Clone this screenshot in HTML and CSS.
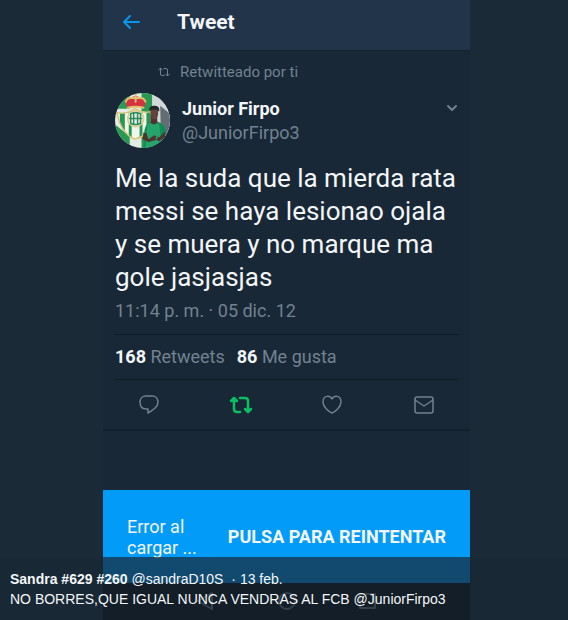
FILE: index.html
```html
<!DOCTYPE html>
<html lang="es">
<head>
<meta charset="utf-8">
<meta name="viewport" content="width=device-width, initial-scale=1">
<title>Tweet</title>
<link rel="stylesheet" href="styles.css">
</head>
<body>
<div class="viewer">

<main class="phone">
	<header class="topbar">
		<button type="button" class="icon-btn back" aria-label="Volver">
			<svg width="20" height="18" viewBox="0 0 20 18"><path d="M17 9H2M8 3L2 9l6 6"/></svg>
		</button>
		<h1>Tweet</h1>
	</header>

	<article class="tweet">
		<p class="context">
			<svg width="12" height="10" viewBox="0 0 24 20"><path d="M1 6l4-4 4 4M5 3v11q0 3 3 3h4M12 3h4q3 0 3 3v11M15 14l4 4 4-4"/></svg>
			Retwitteado por ti
		</p>

		<div class="author">
			<svg class="avatar" viewBox="0 0 56 56" role="img" aria-label="Junior Firpo">
				<defs>
					<clipPath id="round"><circle cx="28" cy="28" r="28"/></clipPath>
					<clipPath id="shield"><path d="M2 20Q12 22 20 16Q30 22 40 18L38 31Q35 43 20 47Q6 41 2 20z"/></clipPath>
				</defs>
				<g clip-path="url(#round)">
					<path fill="#e4eae4" d="M0 0h56v56H0z"/>
					<path fill="#299951" d="M0 0h15v16H0zM0 32l15 12v12H0zM27 0h11v56H27z"/>
					<path fill="#d3d8da" d="M38 0h18v56H38z"/>
					<path fill="#646d75" d="M46 13l10 8v35h-9z"/>
					<g clip-path="url(#shield)">
						<path fill="#f1f5ea" d="M0 10h42v40H0z"/>
						<path fill="#259654" d="M5 10h5v40H5zM14 10h3v40h-3zM25 10h3v40h-3zM32 10h4v40h-4z"/>
					</g>
					<path fill="none" stroke="#d4c477" stroke-width="1.5" d="M2 20Q12 22 20 16Q30 22 40 18L38 31Q35 43 20 47Q6 41 2 20z"/>
					<circle cx="21" cy="26" r="8" fill="#e9eee2" stroke="#d9cf98"/>
					<path fill="none" stroke="#288c60" stroke-width="1.5" d="M16 21q5-2 10 0v10q-5 2-10 0zM15 26h12M19 20v12M23 20v12"/>
					<path fill="#d43442" d="M12 14q-3-6 3-8 3-3 6-3t6 3q6 2 3 8z"/>
					<path fill="none" stroke="#e4c06c" stroke-width="2" d="M13 15q8-2 16 0M11 9q1-4 5-4t5 0 5 0 5 4M21 1v8"/>
					<path fill="#138b56" d="M29 56l1-18q1-7 7-9h6q8 2 9 11l-4 16z"/>
					<path fill="#25a56b" d="M33 32q6-4 12 0l3 24H31z"/>
					<path fill="#4c342f" d="M36 22h7v8q-3 4-7 0zM29 40l3 1 2 6 6-4 4 2-3 3-7 2-6-3zM51 39l-6 6-3-1-1 3 4 2 6-4z"/>
					<ellipse cx="40" cy="20" rx="4" ry="7" fill="#60443b"/>
					<path fill="#242628" d="M35 18q-1-5 5-5t5 6l-2-2h-6z"/>
				</g>
			</svg>
			<div class="names">
				<strong class="name">Junior Firpo</strong>
				<a class="handle" href="#">@JuniorFirpo3</a>
			</div>
			<button type="button" class="icon-btn more" aria-label="Más opciones">
				<svg width="12" height="8" viewBox="0 0 12 8"><path d="M2 2l4 4 4-4"/></svg>
			</button>
		</div>

		<p class="text">Me la suda que la mierda rata messi se haya lesionao ojala y se muera y no marque ma gole jasjasjas</p>
		<time class="date" datetime="2012-12-05T23:14">11:14 p. m. · 05 dic. 12</time>

		<div class="stats">
			<span><b>168</b> Retweets</span>
			<span><b>86</b> Me gusta</span>
		</div>

		<div class="actions">
			<button type="button" class="icon-btn" aria-label="Responder">
				<svg width="20" height="20" viewBox="0 0 20 20"><path d="M7 1h6c4 0 6 3 6 6 0 5-5 8-10 11v-4H7c-4 0-6-3-6-7 0-3 2-6 6-6z"/></svg>
			</button>
			<button type="button" class="icon-btn retweeted" aria-label="Deshacer Retweet">
				<svg width="24" height="20" viewBox="0 0 24 20"><path d="M2 6l3-3 3 3M5 4v10q0 3 3 3h3M11 3h5q3 0 3 3v10M16 14l3 3 3-3"/></svg>
			</button>
			<button type="button" class="icon-btn" aria-label="Me gusta">
				<svg width="20" height="20" viewBox="0 0 20 20"><path d="M10 4C8 0 1 0 1 7c0 5 6 10 9 11 3-1 9-6 9-11 0-7-7-7-9-3z"/></svg>
			</button>
			<button type="button" class="icon-btn" aria-label="Enviar por mensaje">
				<svg width="20" height="18" viewBox="0 0 20 18"><rect x="1" y="1" width="18" height="16" rx="2"/><path d="M1 4l9 6 9-6"/></svg>
			</button>
		</div>
	</article>

	<div class="error">
		<span class="error-text">Error al cargar ...</span>
		<button type="button" class="retry">PULSA PARA REINTENTAR</button>
	</div>

	<nav class="keys">
		<svg width="20" height="20" viewBox="0 0 20 20"><path d="M16 2v16L2 10z"/></svg>
		<svg width="20" height="20" viewBox="0 0 20 20"><circle cx="10" cy="10" r="8"/></svg>
		<svg width="20" height="20" viewBox="0 0 20 20"><path d="M2 3h15v14H2z"/></svg>
	</nav>
</main>

<footer class="caption">
	<p><b>Sandra #629 #260</b> <a href="#">@sandraD10S</a> <span class="when">· 13 feb.</span></p>
	<p>NO BORRES,QUE IGUAL NUNCA VENDRAS AL FCB <a href="#">@JuniorFirpo3</a></p>
</footer>

</div>
</body>
</html>
```
FILE: styles.css
```css
* {
	box-sizing: border-box;
}

body {
	margin: 0;
	background: #1a2a37;
	color: #f3f6f8;
	font-family: Roboto, "Liberation Sans", sans-serif;
}

h1, p {
	margin: 0;
}

a {
	color: inherit;
	text-decoration: none;
}

svg {
	display: block;
	fill: none;
	stroke: currentColor;
	stroke-width: 2;
	stroke-linecap: round;
	stroke-linejoin: round;
}

.viewer {
	position: relative;
	display: flex;
	min-height: 100vh;
	padding: 0 98px 0 103px;
}

.phone {
	display: flex;
	flex: 1;
	flex-direction: column;
	min-width: 0;
	background: #192836;
}

.icon-btn {
	padding: 0;
	border: 0;
	background: none;
	color: #70808e;
	cursor: pointer;
}

/* top bar */
.topbar {
	display: flex;
	align-items: center;
	gap: 35px;
	height: 51px;
	padding: 0 19px 6px;
	border-bottom: 1px solid #152230;
	background: #213449;
}

.topbar h1 {
	font-size: 21px;
	line-height: 24px;
}

.back {
	color: #0996ec;
}

/* tweet */
.tweet {
	padding: 11px 12px 0;
	border-bottom: 2px solid #13202c;
}

.context {
	display: flex;
	align-items: center;
	gap: 10px;
	padding-left: 43px;
	color: #718291;
	font-size: 15px;
	line-height: 20px;
}

.author {
	display: flex;
	gap: 12px;
	margin-top: 11px;
}

.avatar {
	width: 55px;
	height: 55px;
	stroke: none;
}

.names {
	display: flex;
	flex: 1;
	flex-direction: column;
	padding-top: 4px;
	font-size: 18px;
	line-height: 24px;
}

.handle {
	color: #718291;
}

.more {
	align-self: flex-start;
	padding-top: 11px;
}

.text {
	margin-top: 14px;
	font-size: 26px;
	line-height: 33px;
}

.date {
	display: block;
	padding: 6px 0 12px;
	color: #718291;
	font-size: 18px;
	line-height: 22px;
}

.stats {
	display: flex;
	gap: 12px;
	padding: 11px 0;
	border-top: 1px solid #101b26;
	border-bottom: 1px solid #101b26;
	color: #718291;
	font-size: 18px;
	line-height: 22px;
}

.stats b {
	color: #f3f6f8;
}

.actions {
	display: grid;
	grid-template-columns: repeat(4, 1fr);
	align-items: center;
	justify-items: center;
	height: 49px;
	margin: 0 -12px;
}

.actions svg {
	stroke-width: 1.5;
}

.actions .retweeted {
	color: #08bf62;
}

.actions .retweeted svg {
	stroke-width: 2.5;
}

/* error bar */
.error {
	display: flex;
	align-items: center;
	justify-content: space-between;
	height: 93px;
	margin-top: auto;
	padding: 0 24px;
	background: #039bf8;
	font-size: 18px;
	line-height: 21px;
}

.error-text {
	width: 80px;
}

.retry {
	padding: 0;
	border: 0;
	background: none;
	color: inherit;
	font: bold 18px/21px Roboto, "Liberation Sans", sans-serif;
	cursor: pointer;
}

/* android buttons */
.keys {
	display: flex;
	justify-content: center;
	gap: 61px;
	height: 37px;
	padding-top: 8px;
	background: #05070b;
	color: #74787d;
}

/* caption laid over the photo */
.caption {
	position: absolute;
	right: 0;
	bottom: 0;
	left: 0;
	padding: 12px 10px 11px;
	background: rgba(25, 40, 53, 0.7);
	font: 14px/20px "Liberation Sans", Arial, sans-serif;
}

.when {
	margin-left: 4px;
}
```
